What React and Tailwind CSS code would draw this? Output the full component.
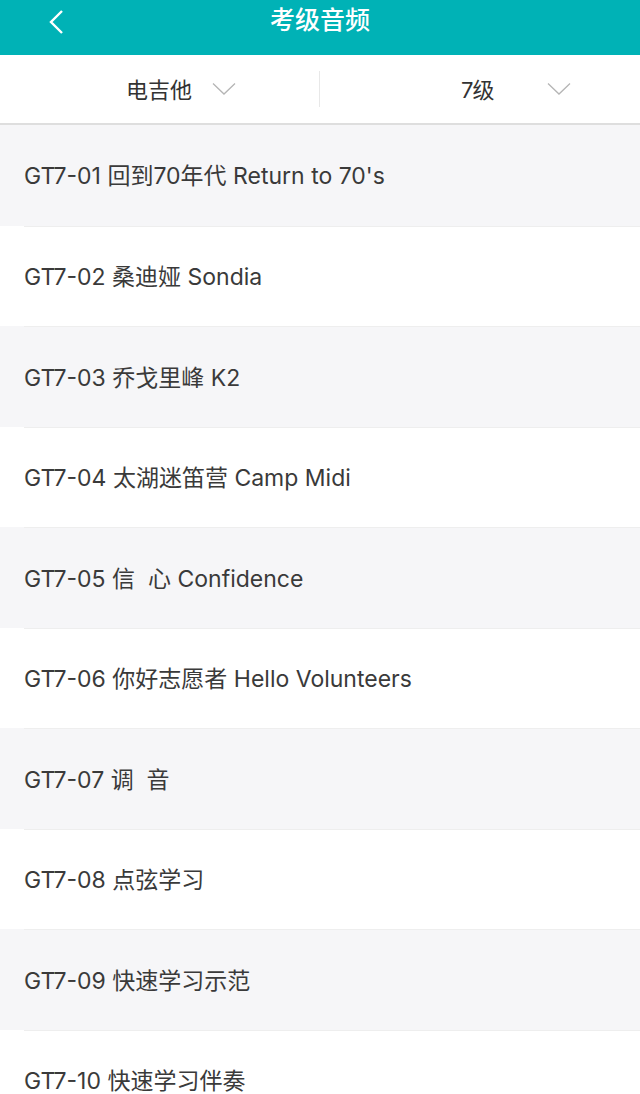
import React from 'react';

const items = [
  'GT7-01 回到70年代 Return to 70\'s',
  'GT7-02 桑迪娅 Sondia',
  'GT7-03 乔戈里峰 K2',
  'GT7-04 太湖迷笛营 Camp Midi',
  'GT7-05 信\u00a0\u00a0心 Confidence',
  'GT7-06 你好志愿者 Hello Volunteers',
  'GT7-07 调\u00a0\u00a0音',
  'GT7-08 点弦学习',
  'GT7-09 快速学习示范',
  'GT7-10 快速学习伴奏',
];

const Chevron = () => (
  <svg width="24" height="14" viewBox="0 0 24 14" fill="none" stroke="#b5b5b5" strokeWidth="1.3">
    <path d="M1 1.5 L12 12 L23 1.5" />
  </svg>
);

export default function App() {
  return (
    <div
      className="w-[640px] h-[1094px] overflow-hidden bg-white"
      style={{ fontFamily: 'Inter, "Noto Sans CJK SC", sans-serif' }}
    >
      {/* 顶部栏 */}
      <div className="relative h-[55px] bg-[#00b2b6] flex items-center justify-center">
        <svg className="absolute left-[48px] top-[9px]" width="16" height="26" viewBox="0 0 16 26" fill="none" stroke="#ffffff" strokeWidth="2.4">
          <path d="M14 2 L3 13 L14 24" />
        </svg>
        <span className="text-white text-[25px] font-medium -mt-[14px]">考级音频</span>
      </div>

      {/* 筛选 */}
      <div className="h-[70px] grid grid-cols-2 items-center border-b-2 border-[#dedede]">
        <div className="flex items-center h-[36px] pl-[126px] border-r border-[#e8e8e8]">
          <span className="text-[22px] text-[#333] mt-[2px]">电吉他</span>
          <span className="ml-[20px]"><Chevron /></span>
        </div>
        <div className="flex items-center pl-[141px]">
          <span className="text-[22px] text-[#333] tracking-[-1px] mt-[2px]">7级</span>
          <span className="ml-[54px]"><Chevron /></span>
        </div>
      </div>

      {/* 列表 */}
      <div>
        {items.map((t, i) => (
          <div key={i} className={i % 2 === 0 ? 'bg-[#f6f6f8]' : 'bg-white'}>
            <div className={`h-[100.5px] flex items-center ml-[24px] ${i > 0 ? 'border-t border-[#eeeeee]' : ''}`}>
              <span className="text-[23px] text-[#3a3a3a] mt-[2px]">{t}</span>
            </div>
          </div>
        ))}
      </div>
    </div>
  );
}
